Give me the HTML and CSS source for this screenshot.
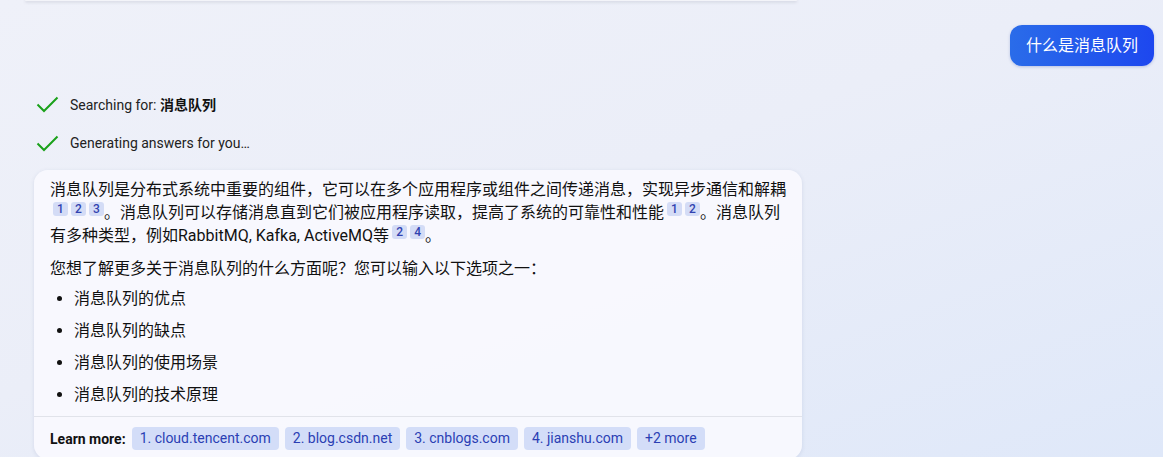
FILE: index.html
```html
<!DOCTYPE html>
<html lang="zh">
<head>
<meta charset="utf-8">
<title>Chat</title>
<link rel="stylesheet" href="styles.css">
</head>
<body>
<div class="prev-card"></div>
<div class="user-row">
  <div class="bubble">什么是消息队列</div>
</div>
<div class="status">
  <div class="status-row">
    <svg class="check" width="23" height="17" viewBox="0 0 23 17"><path d="M1.5 8.5 L8 15 L21.5 1.5" fill="none" stroke="#1aa11a" stroke-width="2"/></svg>
    <span>Searching for: <b>消息队列</b></span>
  </div>
  <div class="status-row">
    <svg class="check" width="23" height="17" viewBox="0 0 23 17"><path d="M1.5 8.5 L8 15 L21.5 1.5" fill="none" stroke="#1aa11a" stroke-width="2"/></svg>
    <span>Generating answers for you…</span>
  </div>
</div>
<div class="card">
  <div class="answer">
    <p>消息队列是分布式系统中重要的组件，它可以在多个应用程序或组件之间传递消息，实现异步通信和解耦<span class="cite">1</span><span class="cite">2</span><span class="cite">3</span>。消息队列可以存储消息直到它们被应用程序读取，提高了系统的可靠性和性能<span class="cite">1</span><span class="cite">2</span>。消息队列有多种类型，例如RabbitMQ, Kafka, ActiveMQ等<span class="cite">2</span><span class="cite">4</span>。</p>
    <p>您想了解更多关于消息队列的什么方面呢？您可以输入以下选项之一：</p>
    <ul>
      <li>消息队列的优点</li>
      <li>消息队列的缺点</li>
      <li>消息队列的使用场景</li>
      <li>消息队列的技术原理</li>
    </ul>
  </div>
  <div class="learn">
    <span class="learn-label">Learn more:</span>
    <span class="chip">1. cloud.tencent.com</span>
    <span class="chip">2. blog.csdn.net</span>
    <span class="chip">3. cnblogs.com</span>
    <span class="chip">4. jianshu.com</span>
    <span class="chip">+2 more</span>
  </div>
</div>
</body>
</html>
```

FILE: styles.css
```css
html, body {
  margin: 0;
  padding: 0;
  height: 100%;
  overflow: hidden;
}
body {
  font-family: Roboto, "Noto Sans CJK SC", sans-serif;
  color: #111;
  background: linear-gradient(160deg, #eff1f9 0%, #ebeef8 45%, #dfe8f9 100%);
}
.prev-card {
  height: 1px;
  margin: 0 366px 0 25px;
  background: #f3f4f9;
  box-shadow: 0 1px 3px rgba(60, 64, 90, 0.3);
  border-radius: 0 0 6px 6px;
}
.user-row {
  display: flex;
  justify-content: flex-end;
  padding: 24px 9px 0 0;
}
.bubble {
  height: 41px;
  line-height: 41px;
  padding: 0 16px;
  font-size: 16px;
  color: #fff;
  border-radius: 12px;
  background: linear-gradient(90deg, #2a6ce9 0%, #1d47ef 100%);
  box-shadow: 0 1px 3px rgba(30, 60, 160, 0.25);
}
.status {
  display: flex;
  flex-direction: column;
  gap: 15px;
  padding: 26px 0 0 36px;
}
.status-row {
  display: flex;
  align-items: center;
  gap: 11px;
  height: 24px;
  font-size: 14px;
  color: #222;
}
.status-row b {
  font-weight: 700;
  color: #111;
}
.check {
  display: block;
}
.card {
  margin: 15px 0 0 34px;
  width: 768px;
  border-radius: 14px;
  background: rgba(248, 249, 254, 0.92);
  box-shadow: 0 1px 4px rgba(60, 70, 120, 0.12);
}
.answer {
  padding: 8px 16px 10px;
  font-size: 16px;
  line-height: 23px;
}
.answer p {
  margin: 0;
}
.answer p + p {
  margin-top: 10px;
}
.answer ul {
  margin: 7px 0 0;
  padding-left: 24px;
}
.answer li + li {
  margin-top: 9px;
}
.cite {
  display: inline-block;
  vertical-align: top;
  margin: 1px 0 0 3px;
  min-width: 15px;
  height: 14px;
  line-height: 14px;
  text-align: center;
  font-family: Roboto, sans-serif;
  font-size: 12px;
  font-weight: 500;
  color: #3142b0;
  background: #d4dcf6;
  border-radius: 3px;
}
.learn {
  display: flex;
  align-items: center;
  gap: 6px;
  padding: 10px 16px 9px;
  border-top: 1px solid #e1e3ea;
}
.learn-label {
  font-size: 14px;
  font-weight: 700;
  color: #111;
}
.chip {
  height: 23px;
  line-height: 23px;
  padding: 0 8px;
  font-size: 14px;
  color: #2b3fb4;
  background: #d3ddf8;
  border-radius: 4px;
}
```
